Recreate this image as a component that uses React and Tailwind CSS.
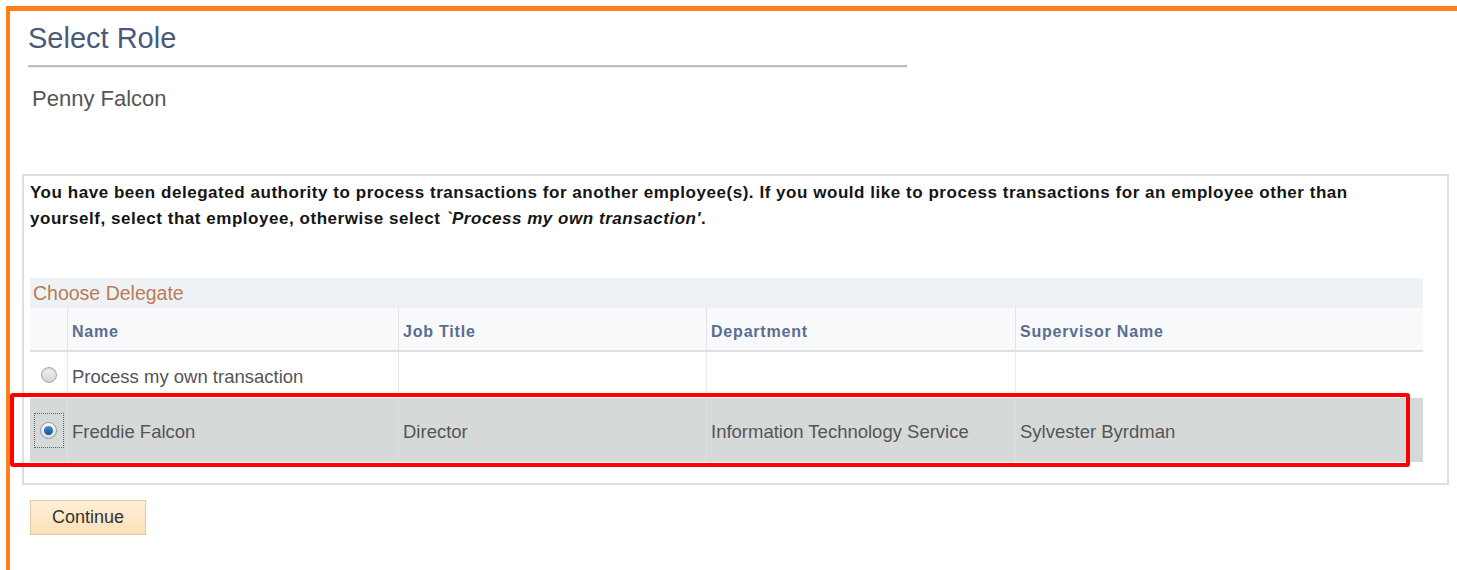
import React from 'react';

const delegates = [
  { id: 'self', name: 'Process my own transaction', title: '', dept: '', supervisor: '', checked: false },
  { id: 'ffalcon', name: 'Freddie Falcon', title: 'Director', dept: 'Information Technology Service', supervisor: 'Sylvester Byrdman', checked: true },
];

const cols = 'grid grid-cols-[37px_331px_308px_309px_408px]';

function Radio({ checked }) {
  if (!checked) {
    return (
      <span className="w-[16px] h-[16px] rounded-full border border-[#a8a8a8] bg-gradient-to-b from-[#f4f4f4] to-[#d2d2d2] shadow-[inset_0_1px_1px_rgba(0,0,0,0.15)]" />
    );
  }
  return (
    <span className="w-[30px] h-[35px] border border-dotted border-[#666] flex items-center justify-center">
      <span className="w-[17px] h-[17px] rounded-full border border-[#8a97a4] bg-gradient-to-b from-[#fafafa] to-[#d8dde2] flex items-center justify-center">
        <span className="w-[9px] h-[9px] rounded-full bg-gradient-to-b from-[#4d8fd0] to-[#0f4f8f]" />
      </span>
    </span>
  );
}

export default function App() {
  return (
    <div className="relative w-[1457px] h-[570px] overflow-hidden bg-white pl-[6px] pt-[6px] font-['Liberation_Sans',Arial,sans-serif]">
      <div className="h-full border-t-[5px] border-l-[4px] border-[#ff7f1a] pl-[12px] pt-[11px]">
        <h1 className="ml-[6px] text-[29px] leading-[32px] text-[#4b5a78]">Select Role</h1>
        <div className="ml-[6px] mt-[11px] w-[879px] h-[2px] bg-[#bdbdbd] shadow-[0_1px_1px_rgba(0,0,0,0.08)]" />
        <p className="ml-[10px] mt-[19px] text-[22px] leading-[26px] text-[#555]">Penny Falcon</p>

        {/* delegation panel */}
        <div className="mt-[62px] w-[1427px] h-[311px] border-2 border-[#dedede] pl-[6px] pt-[4px]">
          <p className="w-[1360px] text-[17px] leading-[26px] tracking-[0.54px] font-bold text-[#151515]">
            You have been delegated authority to process transactions for another employee(s). If you would like to process transactions for an employee other than yourself, select that employee, otherwise select <i>`Process my own transaction'</i>.
          </p>

          <div className="mt-[46px] w-[1393px]">
            <div className="h-[30px] bg-[#eef2f5] pl-[3px] text-[19.5px] leading-[31px] text-[#b97c57]">Choose Delegate</div>

            <div className={`${cols} h-[44px] bg-[#f8f9fa] border-b-2 border-[#e0e0e0] text-[16px] tracking-[0.8px] font-bold text-[#5b6d91]`}>
              <div />
              {['Name', 'Job Title', 'Department', 'Supervisor Name'].map((h) => (
                <div key={h} className="border-l border-[#e4e4e4] pl-[4px] flex items-center pt-[5px]">{h}</div>
              ))}
            </div>

            {delegates.map((d) => (
              <div
                key={d.id}
                className={`${cols} text-[18.5px] text-[#555] ${d.checked ? 'h-[64px] bg-[#d5dad8]' : 'h-[46px] bg-white'}`}
              >
                <div className="flex items-center justify-center">
                  <Radio checked={d.checked} />
                </div>
                {[d.name, d.title, d.dept, d.supervisor].map((v, i) => (
                  <div key={i} className={`border-l ${d.checked ? 'border-[#dde1df]' : 'border-[#ececec]'} pl-[4px] pt-[3px] flex items-center`}>
                    {v}
                  </div>
                ))}
              </div>
            ))}
          </div>
        </div>

        <button className="ml-[8px] mt-[15px] w-[116px] h-[35px] border border-[#e3c9a2] bg-gradient-to-b from-[#fff0d8] to-[#fbe0b8] text-[18px] text-[#333]">
          Continue
        </button>
      </div>

      {/* selection callout */}
      <div className="absolute left-[10px] top-[393px] w-[1400px] h-[74px] border-[4px] border-[#ff0000] rounded-[3px]" />
    </div>
  );
}
